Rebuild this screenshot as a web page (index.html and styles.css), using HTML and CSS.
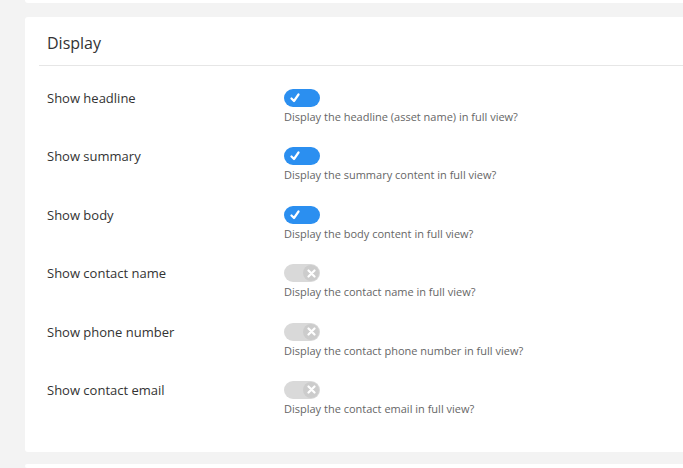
FILE: index.html
```html
<!DOCTYPE html>
<html lang="en">
<head>
    <meta charset="UTF-8">
    <meta name="viewport" content="width=device-width, initial-scale=1.0">
    <title>Display settings</title>
    <link rel="stylesheet" href="styles.css">
</head>
<body>
    <div class="page">
        <div class="card card-top"></div>
        <div class="card card-main">
            <div class="card-header">
                <h2>Display</h2>
            </div>
            <div class="rows">
                <div class="row">
                    <div class="row-label">Show headline</div>
                    <div class="row-field">
                        <span class="toggle on"><svg width="10" height="10" viewBox="0 0 10 10"><path d="M1.5 5.5 L4 8 L8.5 1.5" fill="none" stroke="#fff" stroke-width="2.2" stroke-linecap="round" stroke-linejoin="round"/></svg></span>
                        <p class="hint">Display the headline (asset name) in full view?</p>
                    </div>
                </div>
                <div class="row">
                    <div class="row-label">Show summary</div>
                    <div class="row-field">
                        <span class="toggle on"><svg width="10" height="10" viewBox="0 0 10 10"><path d="M1.5 5.5 L4 8 L8.5 1.5" fill="none" stroke="#fff" stroke-width="2.2" stroke-linecap="round" stroke-linejoin="round"/></svg></span>
                        <p class="hint">Display the summary content in full view?</p>
                    </div>
                </div>
                <div class="row">
                    <div class="row-label">Show body</div>
                    <div class="row-field">
                        <span class="toggle on"><svg width="10" height="10" viewBox="0 0 10 10"><path d="M1.5 5.5 L4 8 L8.5 1.5" fill="none" stroke="#fff" stroke-width="2.2" stroke-linecap="round" stroke-linejoin="round"/></svg></span>
                        <p class="hint">Display the body content in full view?</p>
                    </div>
                </div>
                <div class="row">
                    <div class="row-label">Show contact name</div>
                    <div class="row-field">
                        <span class="toggle off"><span class="knob"><svg width="9" height="9" viewBox="0 0 9 9"><path d="M1.5 1.5 L7.5 7.5 M7.5 1.5 L1.5 7.5" fill="none" stroke="#fff" stroke-width="2.2" stroke-linecap="round"/></svg></span></span>
                        <p class="hint">Display the contact name in full view?</p>
                    </div>
                </div>
                <div class="row">
                    <div class="row-label">Show phone number</div>
                    <div class="row-field">
                        <span class="toggle off"><span class="knob"><svg width="9" height="9" viewBox="0 0 9 9"><path d="M1.5 1.5 L7.5 7.5 M7.5 1.5 L1.5 7.5" fill="none" stroke="#fff" stroke-width="2.2" stroke-linecap="round"/></svg></span></span>
                        <p class="hint">Display the contact phone number in full view?</p>
                    </div>
                </div>
                <div class="row">
                    <div class="row-label">Show contact email</div>
                    <div class="row-field">
                        <span class="toggle off"><span class="knob"><svg width="9" height="9" viewBox="0 0 9 9"><path d="M1.5 1.5 L7.5 7.5 M7.5 1.5 L1.5 7.5" fill="none" stroke="#fff" stroke-width="2.2" stroke-linecap="round"/></svg></span></span>
                        <p class="hint">Display the contact email in full view?</p>
                    </div>
                </div>
            </div>
        </div>
        <div class="card card-next"></div>
    </div>
</body>
</html>
```

FILE: styles.css
```css
html, body {
    margin: 0;
    height: 100%;
    overflow: hidden;
}
body {
    background-color: #f3f3f3;
    font-family: "Open Sans", Arial, sans-serif;
    color: #333;
}
.page {
    display: flex;
    flex-direction: column;
    padding-left: 25px;
}
.card {
    background-color: #fff;
    border-radius: 3px 0 0 3px;
}
.card-top {
    height: 3px;
    margin-bottom: 14px;
    border-radius: 0 0 0 3px;
}
.card-main {
    height: 435px;
    margin-bottom: 12px;
}
.card-next {
    height: 4px;
}
.card-header {
    margin-left: 14px;
    padding: 15px 0 0 8px;
    height: 33px;
    border-bottom: 1px solid #e6e6e6;
}
.card-header h2 {
    margin: 0;
    font-size: 16px;
    font-weight: 400;
    line-height: 22px;
    color: #333;
}
.rows {
    display: flex;
    flex-direction: column;
    gap: 22.4px;
    padding: 23px 0 0 22px;
}
.row {
    display: flex;
}
.row-label {
    width: 237px;
    font-size: 13px;
    font-weight: 500;
    line-height: 19px;
    color: #333;
}
.row-field {
    display: flex;
    flex-direction: column;
    align-items: flex-start;
}
.toggle {
    display: flex;
    align-items: center;
    width: 36px;
    height: 18px;
    border-radius: 9px;
    box-sizing: border-box;
}
.toggle.on {
    background-color: #2b8ff0;
    padding-left: 6px;
}
.toggle.off {
    background-color: #d9d9d9;
    justify-content: flex-end;
    padding-right: 1px;
}
.knob {
    display: flex;
    align-items: center;
    justify-content: center;
    width: 16px;
    height: 16px;
    border-radius: 50%;
    background-color: #cccccc;
}
.hint {
    margin: 1px 0 0;
    font-size: 11px;
    line-height: 17px;
    color: #666;
}
```
